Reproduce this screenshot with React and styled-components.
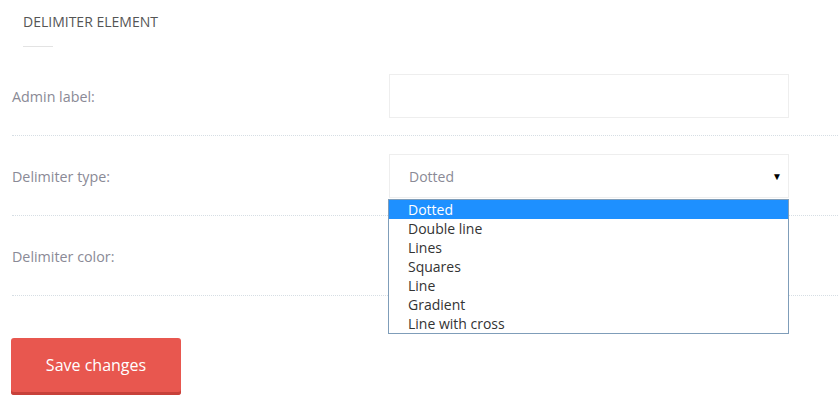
import React, { useState } from "react";
import styled, { createGlobalStyle } from "styled-components";

const GlobalStyle = createGlobalStyle`
  body {
    margin: 0;
    background: #fff;
    font-family: "Open Sans", "Liberation Sans", sans-serif;
  }
`;

const OPTIONS = [
  "Dotted",
  "Double line",
  "Lines",
  "Squares",
  "Line",
  "Gradient",
  "Line with cross",
];

function App() {
  const [selected] = useState("Dotted");

  return (
    <Page>
      <GlobalStyle />
      <Header>
        <Title>DELIMITER ELEMENT</Title>
        <TitleRule />
      </Header>
      <Row>
        <Label>Admin label:</Label>
        <Field />
      </Row>
      <Row>
        <Label>Delimiter type:</Label>
        <SelectWrap>
          <Field>
            <SelectValue>{selected}</SelectValue>
            <Arrow>▼</Arrow>
          </Field>
          <Dropdown>
            {OPTIONS.map((opt) => (
              <Option key={opt} active={opt === selected}>
                {opt}
              </Option>
            ))}
          </Dropdown>
        </SelectWrap>
      </Row>
      <Row>
        <Label>Delimiter color:</Label>
        <Field />
      </Row>
      <SaveButton>Save changes</SaveButton>
    </Page>
  );
}

const Page = styled.div`
  padding-left: 12px;
  width: 826px;
  height: 400px;
  overflow: hidden;
`;

const Header = styled.div`
  padding: 13px 0 0 11px;
  height: 43px;
  box-sizing: border-box;
  height: 56px;
`;

const Title = styled.div`
  font-size: 14px;
  line-height: 18px;
  color: #555;
`;

const TitleRule = styled.div`
  width: 30px;
  height: 1px;
  background: #e3e3e3;
  margin-top: 15px;
`;

const Row = styled.div`
  display: flex;
  align-items: center;
  padding: 18px 0 17px;
  border-bottom: 1px dotted #d6dee4;
`;

const Label = styled.div`
  width: 377px;
  font-size: 14.3px;
  color: #8a8a96;
`;

const Field = styled.div`
  position: relative;
  box-sizing: border-box;
  width: 400px;
  height: 44px;
  border: 1px solid #eeeeee;
  display: flex;
  align-items: center;
  padding: 0 19px;
`;

const SelectWrap = styled.div`
  position: relative;
`;

const SelectValue = styled.span`
  flex: 1;
  font-size: 14px;
  color: #8a8a96;
`;

const Arrow = styled.span`
  font-size: 10px;
  color: #000;
  margin-right: -13px;
`;

const Dropdown = styled.div`
  position: absolute;
  top: 45px;
  left: -1px;
  width: 401px;
  box-sizing: border-box;
  border: 1px solid #7f9db9;
  background: #fff;
  z-index: 2;
`;

const Option = styled.div`
  height: 19px;
  line-height: 19px;
  padding-left: 19px;
  font-size: 14px;
  color: ${(p) => (p.active ? "#fff" : "#333")};
  background: ${(p) => (p.active ? "#1e90ff" : "transparent")};
`;

const SaveButton = styled.button`
  display: block;
  margin: 42px 0 0 -1px;
  width: 170px;
  height: 57px;
  border: none;
  border-radius: 3px;
  background: #e8574f;
  box-shadow: inset 0 -3px 0 #c7413a;
  color: #fff;
  font-family: "Open Sans", "Liberation Sans", sans-serif;
  font-size: 16px;
  padding: 0 0 3px;
  cursor: pointer;
`;

export default App;
